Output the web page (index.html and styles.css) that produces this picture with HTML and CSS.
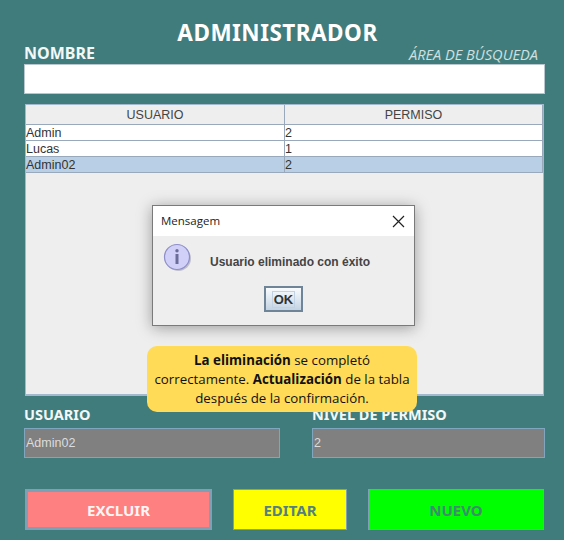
FILE: index.html
```html
<!DOCTYPE html>
<html lang="en">
<head>
    <meta charset="UTF-8">
    <meta name="viewport" content="width=device-width, initial-scale=1.0">
    <title>Administrador</title>
    <link rel="stylesheet" href="styles.css">
</head>
<body>
    <div class="window">
        <h1 class="title">ADMINISTRADOR</h1>
        <div class="search-head">
            <span class="label">NOMBRE</span>
            <span class="search-hint">ÁREA DE BÚSQUEDA</span>
        </div>
        <div class="search-input"></div>

        <div class="table-box">
            <div class="row head">
                <div class="cell">USUARIO</div>
                <div class="cell">PERMISO</div>
            </div>
            <div class="row">
                <div class="cell">Admin</div>
                <div class="cell">2</div>
            </div>
            <div class="row">
                <div class="cell">Lucas</div>
                <div class="cell">1</div>
            </div>
            <div class="row selected">
                <div class="cell">Admin02</div>
                <div class="cell">2</div>
            </div>
        </div>

        <div class="fields">
            <div class="field user-field">
                <span class="label small">USUARIO</span>
                <div class="grey-input">Admin02</div>
            </div>
            <div class="field level-field">
                <span class="label small">NIVEL DE PERMISO</span>
                <div class="grey-input">2</div>
            </div>
        </div>

        <div class="buttons">
            <div class="btn btn-delete"><span>EXCLUIR</span></div>
            <div class="btn btn-edit">EDITAR</div>
            <div class="btn btn-new">NUEVO</div>
        </div>

        <div class="dialog">
            <div class="dialog-bar">
                <span>Mensagem</span>
                <svg class="close" width="13" height="13" viewBox="0 0 13 13">
                    <path d="M1 1L12 12M12 1L1 12" stroke="#222" stroke-width="1.2" fill="none"/>
                </svg>
            </div>
            <div class="dialog-body">
                <div class="dialog-msg">
                    <svg class="info" width="30" height="30" viewBox="0 0 30 30">
                        <circle cx="15.5" cy="15.5" r="12.5" fill="#9a9ab4" opacity="0.55"/>
                        <circle cx="14" cy="14" r="12.5" fill="#d0d0f8" stroke="#8f8fc8" stroke-width="1.2"/>
                        <circle cx="14" cy="7.8" r="1.7" fill="#6c6c98"/>
                        <rect x="12.5" y="11" width="3" height="10" fill="#6c6c98"/>
                    </svg>
                    <span>Usuario eliminado con éxito</span>
                </div>
                <div class="ok-btn"><span>OK</span></div>
            </div>
        </div>

        <div class="callout">
            <b>La eliminación</b> se completó correctamente. <b>Actualización</b> de la tabla después de la confirmación.
        </div>
    </div>
</body>
</html>
```

FILE: styles.css
```css
body {
    margin: 0;
    background-color: #417c7c;
}
.window {
    position: relative;
    width: 564px;
    height: 540px;
    padding: 22px 19px 0 24px;
    box-sizing: border-box;
    overflow: hidden;
    font-family: "Liberation Sans", Arial, sans-serif;
}
.title {
    margin: 0;
    height: 23px;
    padding-right: 14px;
    color: #fff;
    font-family: "Noto Sans", sans-serif;
    font-size: 22.5px;
    line-height: 22px;
    font-weight: 700;
    letter-spacing: 0.5px;
    text-align: center;
}
.search-head {
    display: flex;
    justify-content: space-between;
    align-items: center;
    height: 19px;
    padding-right: 7px;
}
.label {
    position: relative;
    top: -1px;
    color: #f2f8f8;
    font-family: "Noto Sans", sans-serif;
    font-size: 16px;
    line-height: 19px;
    font-weight: 700;
}
.label.small {
    top: 0;
    font-size: 14.5px;
    line-height: 15px;
}
.search-hint {
    color: #cfe0e0;
    font-family: "Open Sans", sans-serif;
    font-size: 14.6px;
    line-height: 17px;
    font-style: italic;
}
.search-input {
    height: 30px;
    box-sizing: border-box;
    background-color: #fff;
    border: 1px solid #b8c6d0;
}
.table-box {
    height: 292px;
    margin: 10px 1px 0 1px;
    box-sizing: border-box;
    background-color: #eeeeee;
    border: 1px solid #a3b8cc;
    border-bottom-width: 2px;
}
.row {
    display: grid;
    grid-template-columns: 259px 1fr;
    height: 15px;
    background-color: #fff;
    border-bottom: 1px solid #99a8bb;
    font-size: 12.5px;
    line-height: 16px;
    color: #333;
}
.row .cell {
    border-right: 1px solid #99a8bb;
}
.row.head {
    height: 19px;
    background-color: #eeeeee;
    line-height: 20px;
    text-align: center;
    color: #444;
}
.row.selected {
    background-color: #b8cfe5;
}
.fields {
    display: flex;
    justify-content: space-between;
    margin-top: 11px;
}
.field {
    display: flex;
    flex-direction: column;
    gap: 6px;
}
.user-field {
    width: 256px;
}
.level-field {
    width: 233px;
}
.grey-input {
    height: 30px;
    box-sizing: border-box;
    padding-left: 1px;
    background-color: #808080;
    border: 1px solid #7fa5bf;
    color: #dcdcdc;
    font-size: 12.5px;
    line-height: 28px;
}
.buttons {
    display: flex;
    margin-top: 31px;
    margin-left: 1px;
}
.btn {
    display: flex;
    justify-content: center;
    align-items: center;
    height: 41px;
    box-sizing: border-box;
    border: 1px solid #7f9fb5;
    font-family: "Noto Sans", sans-serif;
    font-size: 15px;
    font-weight: 700;
}
.btn-delete {
    width: 187px;
    padding: 2px;
    background-color: #ff8080;
    outline: 1px solid #7f9fb5;
    outline-offset: -3px;
    border-width: 2px;
    color: #fff5f5;
}
.btn-edit {
    width: 114px;
    margin-left: 21px;
    background-color: #ffff00;
    color: #54807f;
}
.btn-new {
    width: 176px;
    margin-left: 21px;
    background-color: #00ff00;
    color: #3f8c6c;
}
.dialog {
    position: absolute;
    left: 152px;
    top: 205px;
    width: 263px;
    height: 121px;
    box-sizing: border-box;
    background-color: #eeeeee;
    border: 1px solid #7a7a7a;
    box-shadow: 0 2px 14px rgba(0, 0, 0, 0.35);
}
.dialog-bar {
    display: flex;
    justify-content: space-between;
    align-items: center;
    height: 30px;
    padding: 0 9px 0 8px;
    background-color: #fff;
    color: #222;
    font-family: "Open Sans", sans-serif;
    font-size: 11.5px;
    line-height: 28px;
}
.dialog-body {
    padding-top: 7px;
}
.dialog-msg {
    display: flex;
    align-items: center;
    height: 30px;
    padding-left: 10px;
    color: #444;
    font-size: 12px;
    font-weight: 700;
}
.dialog-msg span {
    margin-left: 17px;
    padding-top: 8px;
}
.ok-btn {
    display: flex;
    justify-content: center;
    align-items: center;
    width: 39px;
    height: 26px;
    margin: 13px auto 0;
    box-sizing: border-box;
    background: linear-gradient(#fafcfe, #c3d3e3);
    border: 2px solid #6f8496;
    color: #333;
    font-size: 13px;
    font-weight: 700;
}
.ok-btn span {
    padding: 0 1px;
    outline: 1px solid #c0d2e4;
}
.callout {
    position: absolute;
    left: 147px;
    top: 346px;
    width: 270px;
    height: 66px;
    box-sizing: border-box;
    padding: 5px 6px;
    background-color: #ffdb58;
    border-radius: 10px;
    color: #111;
    font-family: "Open Sans", sans-serif;
    font-size: 13.3px;
    line-height: 19px;
    text-align: center;
}
```
